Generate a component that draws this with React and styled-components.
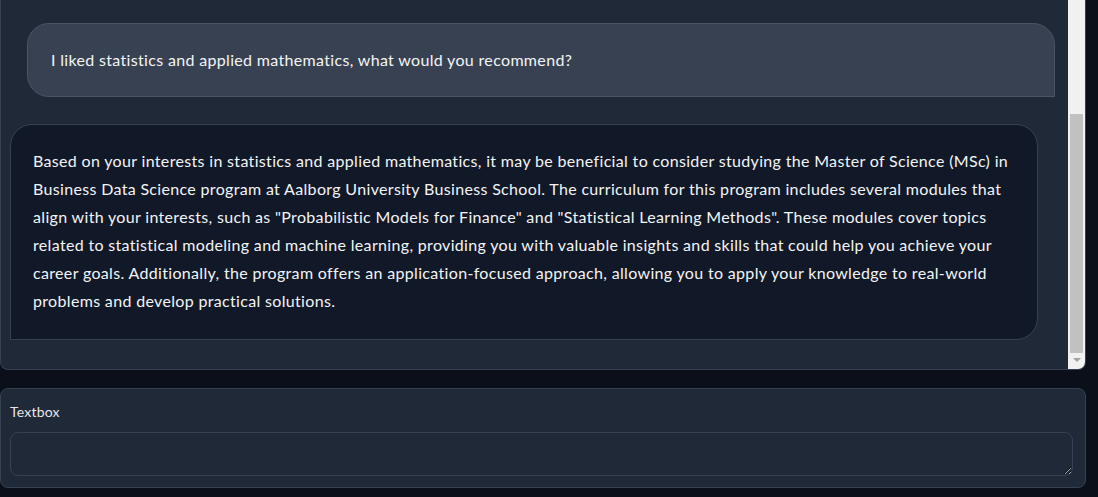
import React from "react";
import styled, { createGlobalStyle } from "styled-components";

const GlobalStyle = createGlobalStyle`
  html, body {
    margin: 0;
    padding: 0;
    background: #0b0f19;
  }
  body {
    font-family: "Lato", "Liberation Sans", sans-serif;
    overflow: hidden;
  }
`;

const Page = styled.div`
  width: 1086px;
  display: flex;
  flex-direction: column;
  gap: 18px;
`;

const ChatPanel = styled.div`
  height: 370px;
  display: flex;
  background: #1f2937;
  border: 1px solid #374151;
  border-top: none;
  border-radius: 0 0 8px 8px;
  overflow: hidden;
  box-sizing: border-box;
`;

const Messages = styled.div`
  flex: 1;
  display: flex;
  flex-direction: column;
  gap: 27px;
  padding: 23px 13px 0 9px;
`;

const Bubble = styled.div`
  box-sizing: border-box;
  width: 1028px;
  align-self: ${(p) => (p.$user ? "flex-end" : "flex-start")};
  background: ${(p) => (p.$user ? "#374151" : "#111827")};
  border: 1px solid ${(p) => (p.$user ? "#4b5563" : "#374151")};
  border-radius: ${(p) => (p.$user ? "22px 22px 0 22px" : "22px 22px 22px 0")};
  padding: ${(p) => (p.$user ? "22px 23px" : "22px 22px 24px")};
  color: #f3f4f6;
  font-size: 16px;
  letter-spacing: 0.33px;
  line-height: 28px;
`;

const Scrollbar = styled.div`
  width: 17px;
  background: #f1f1f1;
  display: flex;
  flex-direction: column;
  align-items: center;
  padding-top: 114px;
  box-sizing: border-box;
`;

const Thumb = styled.div`
  width: 13px;
  height: 239px;
  background: #c1c1c1;
`;

const Arrow = styled.div`
  margin-top: 5px;
  width: 0;
  height: 0;
  border-left: 4px solid transparent;
  border-right: 4px solid transparent;
  border-top: 4px solid #a3a3a3;
`;

const Block = styled.div`
  box-sizing: border-box;
  height: 100px;
  background: #1f2937;
  border: 1px solid #374151;
  border-radius: 8px;
  padding: 13px 13px 11px 9px;
  display: flex;
  flex-direction: column;
  gap: 10px;
`;

const Label = styled.span`
  color: #e5e7eb;
  font-size: 14px;
  letter-spacing: 0.2px;
  line-height: 20px;
`;

const TextArea = styled.textarea`
  box-sizing: border-box;
  width: 1063px;
  height: 46px;
  background: #1f2937;
  border: 1px solid #374151;
  border-radius: 8px;
  color: #f3f4f6;
  font-family: inherit;
  font-size: 14px;
  padding: 8px 12px;
  outline: none;
  resize: vertical;
`;

export default function App() {
  return (
    <>
      <GlobalStyle />
      <Page>
        <ChatPanel>
          <Messages>
            <Bubble $user>
              I liked statistics and applied mathematics, what would you recommend?
            </Bubble>
            <Bubble>
              Based on your interests in statistics and applied mathematics, it may be beneficial to
              consider studying the Master of Science (MSc) in Business Data Science program at Aalborg
              University Business School. The curriculum for this program includes several modules that
              align with your interests, such as "Probabilistic Models for Finance" and "Statistical
              Learning Methods". These modules cover topics related to statistical modeling and machine
              learning, providing you with valuable insights and skills that could help you achieve your
              career goals. Additionally, the program offers an application-focused approach, allowing you
              to apply your knowledge to real-world problems and develop practical solutions.
            </Bubble>
          </Messages>
          <Scrollbar>
            <Thumb />
            <Arrow />
          </Scrollbar>
        </ChatPanel>
        <Block>
          <Label>Textbox</Label>
          <TextArea />
        </Block>
      </Page>
    </>
  );
}
